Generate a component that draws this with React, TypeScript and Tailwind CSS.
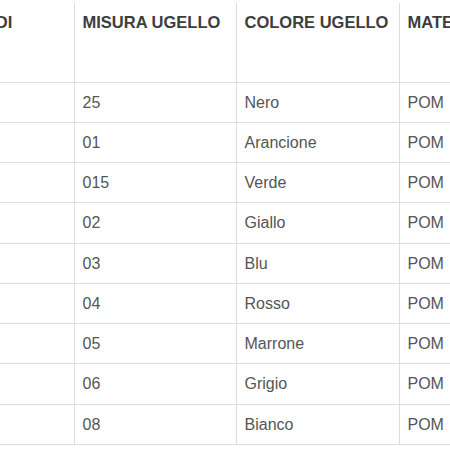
import React from "react";

const rows: [string, string][] = [
  ["25", "Nero"],
  ["01", "Arancione"],
  ["015", "Verde"],
  ["02", "Giallo"],
  ["03", "Blu"],
  ["04", "Rosso"],
  ["05", "Marrone"],
  ["06", "Grigio"],
  ["08", "Bianco"],
];

export default function App() {
  return (
    <div
      className="w-[450px] h-[450px] overflow-hidden bg-white"
      style={{ fontFamily: '"Liberation Sans", Arial, sans-serif' }}
    >
      <div className="pt-[3px] ml-[-82px]">
        <table className="table-fixed border-collapse text-[16px] leading-[21px] w-[700px]">
          <colgroup>
            <col className="w-[156px]" />
            <col className="w-[162px]" />
            <col className="w-[163px]" />
            <col className="w-[219px]" />
          </colgroup>
          <thead>
            <tr className="h-[79px]">
              {["CODICE DI", "MISURA UGELLO", "COLORE UGELLO", "MATERIALE"].map((h, i) => (
                <th
                  key={h}
                  className={`align-top text-left font-bold text-[16.5px] text-[#3d3d3d] pr-2 ${
                    i === 0 ? "pl-[9px]" : "pl-2"
                  } pt-[9px] border-b border-[#dcdcdc] ${i < 3 ? "border-r" : ""} whitespace-nowrap`}
                >
                  {h}
                </th>
              ))}
            </tr>
          </thead>
          <tbody>
            {rows.map(([m, c]) => (
              <tr key={m} className="h-[40.25px]">
                <td className="px-2 border-b border-r border-[#dcdcdc]"></td>
                <td className="px-2 text-[#555] border-b border-r border-[#dcdcdc]">{m}</td>
                <td className="px-2 text-[#555] border-b border-r border-[#dcdcdc]">{c}</td>
                <td className="px-2 text-[#555] border-b border-[#dcdcdc]">POM</td>
              </tr>
            ))}
          </tbody>
        </table>
      </div>
    </div>
  );
}
